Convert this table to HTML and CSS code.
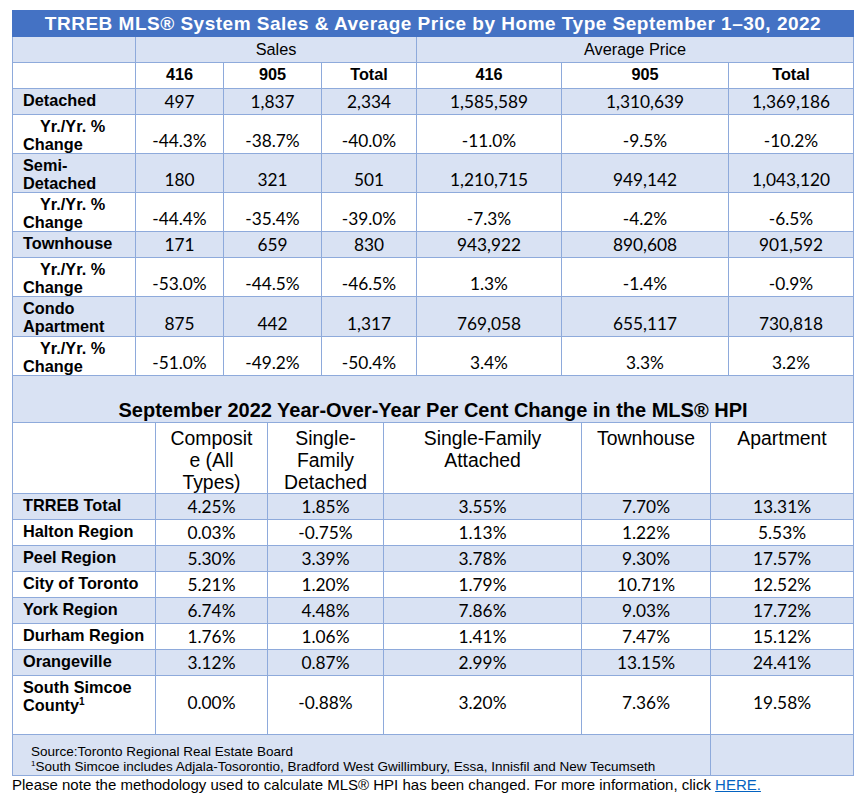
FILE: index.html
```html
<!DOCTYPE html>
<html lang="en">
<head>
<meta charset="utf-8">
<title>TRREB MLS® System Sales &amp; Average Price – September 2022</title>
<link rel="stylesheet" href="styles.css">
</head>
<body>
<div class="page">
  <table class="grid sales">
    <colgroup>
      <col class="w123"><col class="w88"><col class="w98"><col class="w95"><col class="w145"><col class="w167"><col class="w124">
    </colgroup>
    <tr class="title"><th colspan="7">TRREB MLS® System Sales &amp; Average Price by Home Type September 1–30, 2022</th></tr>
    <tr class="band r26"><td></td><td class="grp" colspan="3">Sales</td><td class="grp" colspan="3">Average Price</td></tr>
    <tr class="r26"><td></td><th class="hd">416</th><th class="hd">905</th><th class="hd">Total</th><th class="hd">416</th><th class="hd">905</th><th class="hd">Total</th></tr>
    <tr class="band r26"><th class="lbl">Detached</th><td class="num">497</td><td class="num">1,837</td><td class="num">2,334</td><td class="num">1,585,589</td><td class="num">1,310,639</td><td class="num">1,369,186</td></tr>
    <tr class="r39"><th class="lbl yr">Yr./Yr. %<br>Change</th><td class="num">-44.3%</td><td class="num">-38.7%</td><td class="num">-40.0%</td><td class="num">-11.0%</td><td class="num">-9.5%</td><td class="num">-10.2%</td></tr>
    <tr class="band r39"><th class="lbl">Semi-<br>Detached</th><td class="num">180</td><td class="num">321</td><td class="num">501</td><td class="num">1,210,715</td><td class="num">949,142</td><td class="num">1,043,120</td></tr>
    <tr class="r39"><th class="lbl yr">Yr./Yr. %<br>Change</th><td class="num">-44.4%</td><td class="num">-35.4%</td><td class="num">-39.0%</td><td class="num">-7.3%</td><td class="num">-4.2%</td><td class="num">-6.5%</td></tr>
    <tr class="band r26"><th class="lbl">Townhouse</th><td class="num">171</td><td class="num">659</td><td class="num">830</td><td class="num">943,922</td><td class="num">890,608</td><td class="num">901,592</td></tr>
    <tr class="r39"><th class="lbl yr">Yr./Yr. %<br>Change</th><td class="num">-53.0%</td><td class="num">-44.5%</td><td class="num">-46.5%</td><td class="num">1.3%</td><td class="num">-1.4%</td><td class="num">-0.9%</td></tr>
    <tr class="band r40"><th class="lbl">Condo<br>Apartment</th><td class="num">875</td><td class="num">442</td><td class="num">1,317</td><td class="num">769,058</td><td class="num">655,117</td><td class="num">730,818</td></tr>
    <tr class="r39"><th class="lbl yr">Yr./Yr. %<br>Change</th><td class="num">-51.0%</td><td class="num">-49.2%</td><td class="num">-50.4%</td><td class="num">3.4%</td><td class="num">3.3%</td><td class="num">3.2%</td></tr>
  </table>

  <table class="grid hpi">
    <colgroup>
      <col class="w143"><col class="w112"><col class="w116"><col class="w198"><col class="w129"><col class="w142">
    </colgroup>
    <tr class="band r47"><th class="subtitle" colspan="6">September 2022 Year-Over-Year Per Cent Change in the MLS® HPI</th></tr>
    <tr class="r70"><td></td><th class="hh">Composit<br>e (All<br>Types)</th><th class="hh">Single-<br>Family<br>Detached</th><th class="hh">Single-Family<br>Attached</th><th class="hh">Townhouse</th><th class="hh">Apartment</th></tr>
    <tr class="band r26"><th class="lbl">TRREB Total</th><td class="num">4.25%</td><td class="num">1.85%</td><td class="num">3.55%</td><td class="num">7.70%</td><td class="num">13.31%</td></tr>
    <tr class="r26"><th class="lbl">Halton Region</th><td class="num">0.03%</td><td class="num">-0.75%</td><td class="num">1.13%</td><td class="num">1.22%</td><td class="num">5.53%</td></tr>
    <tr class="band r26"><th class="lbl">Peel Region</th><td class="num">5.30%</td><td class="num">3.39%</td><td class="num">3.78%</td><td class="num">9.30%</td><td class="num">17.57%</td></tr>
    <tr class="r26"><th class="lbl">City of Toronto</th><td class="num">5.21%</td><td class="num">1.20%</td><td class="num">1.79%</td><td class="num">10.71%</td><td class="num">12.52%</td></tr>
    <tr class="band r26"><th class="lbl">York Region</th><td class="num">6.74%</td><td class="num">4.48%</td><td class="num">7.86%</td><td class="num">9.03%</td><td class="num">17.72%</td></tr>
    <tr class="r26"><th class="lbl">Durham Region</th><td class="num">1.76%</td><td class="num">1.06%</td><td class="num">1.41%</td><td class="num">7.47%</td><td class="num">15.12%</td></tr>
    <tr class="band r26"><th class="lbl">Orangeville</th><td class="num">3.12%</td><td class="num">0.87%</td><td class="num">2.99%</td><td class="num">13.15%</td><td class="num">24.41%</td></tr>
    <tr class="r59 tall"><th class="lbl">South Simcoe<br>County<sup class="sup">1</sup></th><td class="num">0.00%</td><td class="num">-0.88%</td><td class="num">3.20%</td><td class="num">7.36%</td><td class="num">19.58%</td></tr>
    <tr class="band r41"><td class="notes" colspan="5">Source:Toronto Regional Real Estate Board<br><span class="fn"><sup class="fsup">1</sup>South Simcoe includes Adjala-Tosorontio, Bradford West Gwillimbury, Essa, Innisfil and New Tecumseth</span></td><td></td></tr>
  </table>

  <p class="method">Please note the methodology used to calculate MLS® HPI has been changed. For more information, click <a class="link" href="#">HERE.</a></p>
</div>
</body>
</html>
```

FILE: styles.css
```css
* { box-sizing: border-box; }

html, body {
  margin: 0;
  background: #ffffff;
}

body {
  font-family: "Liberation Sans", Arial, sans-serif;
  color: #000;
}

.page {
  padding: 10px 0 0 12px;
}

.grid {
  border-collapse: collapse;
  table-layout: fixed;
  width: 841px;
}

.grid td,
.grid th {
  border: 1px solid #8eaadb;
  padding: 0;
  font-weight: normal;
}

.w123 { width: 123px; }
.w88 { width: 88px; }
.w98 { width: 98px; }
.w95 { width: 95px; }
.w145 { width: 145px; }
.w167 { width: 167px; }
.w124 { width: 125px; }

.w143 { width: 143px; }
.w112 { width: 112px; }
.w116 { width: 116px; }
.w198 { width: 198px; }
.w129 { width: 129px; }
.w142 { width: 143px; }

.r26 { height: 26px; }
.r39 { height: 39px; }
.r40 { height: 40px; }
.r41 { height: 41px; }
.r47 { height: 47px; }
.r59 { height: 59px; }
.r70 { height: 70px; }

.band > td,
.band > th {
  background: #d9e2f3;
}

.title th {
  background: #4472c4;
  border-color: #4472c4;
  color: #fff;
  font-weight: bold;
  font-size: 19px;
  letter-spacing: 0.5px;
  line-height: 20px;
  height: 26px;
  padding-top: 3px;
  text-align: center;
  vertical-align: top;
  white-space: nowrap;
}

.grp {
  text-align: center;
  vertical-align: top;
  font-size: 16.3px;
  line-height: 17.5px;
  padding-top: 4px !important;
}

.hd {
  text-align: center;
  vertical-align: top;
  font-weight: bold !important;
  font-size: 16.3px;
  line-height: 17.5px;
  padding-top: 3px !important;
}

.lbl {
  text-align: left;
  vertical-align: top;
  font-weight: bold !important;
  font-size: 16.3px;
  line-height: 17.5px;
  padding: 3px 2px 0 10px !important;
}

.yr {
  text-indent: 17px;
}

.num {
  text-align: center;
  vertical-align: bottom;
  font-family: Lato, "Open Sans", sans-serif;
  font-size: 17.3px;
  line-height: 20px;
  padding-bottom: 2px !important;
}

.tall .num {
  padding-bottom: 21px !important;
}

.sup {
  font-size: 10px;
  line-height: 0;
  vertical-align: 6px;
}

.subtitle {
  text-align: center;
  vertical-align: bottom;
  font-weight: bold !important;
  font-size: 20px;
  line-height: 22px;
  padding-bottom: 1px !important;
  white-space: nowrap;
}

.hh {
  text-align: center;
  vertical-align: top;
  font-size: 19.4px;
  line-height: 22px;
  padding-top: 4px !important;
}

.hpi {
  margin-top: -1px;
}

.notes {
  vertical-align: bottom;
  font-size: 13.5px;
  line-height: 15px;
  padding: 0 0 1px 18px !important;
  white-space: nowrap;
}

.fsup {
  font-size: 8px;
  line-height: 0;
  vertical-align: 5px;
}

.method {
  margin: 0;
  font-size: 15px;
  line-height: 17px;
  white-space: nowrap;
}

.link {
  color: #0563c1;
  text-decoration: underline;
}
```
